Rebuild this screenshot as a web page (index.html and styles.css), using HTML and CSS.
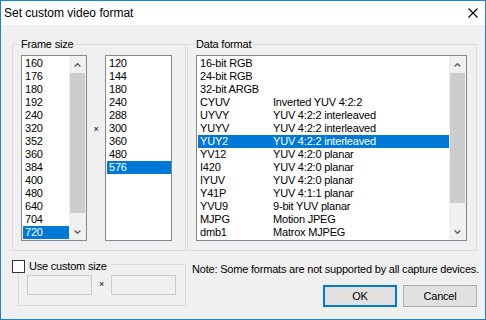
FILE: index.html
```html
<!DOCTYPE html>
<html lang="en">
<head>
    <meta charset="UTF-8">
    <title>Set custom video format</title>
    <link rel="stylesheet" href="styles.css">
</head>
<body>
    <div class="window">
        <div class="titlebar">
            <span class="title">Set custom video format</span>
            <svg class="close" width="10" height="10" viewBox="0 0 10 10">
                <path d="M0.5 0.5 L9.5 9.5 M9.5 0.5 L0.5 9.5" stroke="#000" stroke-width="1.1" fill="none"/>
            </svg>
        </div>

        <div class="dialog">
            <div class="col-left">
                <fieldset class="group">
                    <legend>Frame size</legend>
                    <div class="group-inner frame-inner">
                        <div class="listbox width-list">
                            <ul class="items">
                                <li>160</li><li>176</li><li>180</li><li>192</li><li>240</li>
                                <li>320</li><li>352</li><li>360</li><li>384</li><li>400</li>
                                <li>480</li><li>640</li><li>704</li><li class="selected">720</li>
                            </ul>
                            <div class="scrollbar">
                                <div class="arrow"><svg width="7" height="4" viewBox="0 0 7 4"><polyline points="0.6,3.5 3.5,0.7 6.4,3.5" fill="none" stroke="#606060" stroke-width="1.4"/></svg></div>
                                <div class="track"><div class="thumb thumb-frame"></div></div>
                                <div class="arrow"><svg width="7" height="4" viewBox="0 0 7 4"><polyline points="0.6,0.5 3.5,3.3 6.4,0.5" fill="none" stroke="#606060" stroke-width="1.4"/></svg></div>
                            </div>
                        </div>
                        <span class="times">×</span>
                        <div class="listbox height-list">
                            <ul class="items">
                                <li>120</li><li>144</li><li>180</li><li>240</li><li>288</li>
                                <li>300</li><li>360</li><li>480</li><li class="selected">576</li>
                            </ul>
                        </div>
                    </div>
                </fieldset>

                <fieldset class="group custom-group">
                    <legend class="check-legend"><span class="checkbox"></span><span>Use custom size</span></legend>
                    <div class="group-inner custom-inner">
                        <input class="edit" type="text" disabled>
                        <span class="times-small">×</span>
                        <input class="edit" type="text" disabled>
                    </div>
                </fieldset>
            </div>

            <div class="col-right">
                <fieldset class="group">
                    <legend>Data format</legend>
                    <div class="group-inner data-inner">
                        <div class="listbox format-list">
                            <ul class="items">
                                <li><span class="code">16-bit RGB</span></li>
                                <li><span class="code">24-bit RGB</span></li>
                                <li><span class="code">32-bit ARGB</span></li>
                                <li><span class="code">CYUV</span><span>Inverted YUV 4:2:2</span></li>
                                <li><span class="code">UYVY</span><span>YUV 4:2:2 interleaved</span></li>
                                <li><span class="code">YUYV</span><span>YUV 4:2:2 interleaved</span></li>
                                <li class="selected"><span class="code">YUY2</span><span>YUV 4:2:2 interleaved</span></li>
                                <li><span class="code">YV12</span><span>YUV 4:2:0 planar</span></li>
                                <li><span class="code">I420</span><span>YUV 4:2:0 planar</span></li>
                                <li><span class="code">IYUV</span><span>YUV 4:2:0 planar</span></li>
                                <li><span class="code">Y41P</span><span>YUV 4:1:1 planar</span></li>
                                <li><span class="code">YVU9</span><span>9-bit YUV planar</span></li>
                                <li><span class="code">MJPG</span><span>Motion JPEG</span></li>
                                <li><span class="code">dmb1</span><span>Matrox MJPEG</span></li>
                            </ul>
                            <div class="scrollbar">
                                <div class="arrow"><svg width="7" height="4" viewBox="0 0 7 4"><polyline points="0.6,3.5 3.5,0.7 6.4,3.5" fill="none" stroke="#606060" stroke-width="1.4"/></svg></div>
                                <div class="track"><div class="thumb thumb-data"></div></div>
                                <div class="arrow"><svg width="7" height="4" viewBox="0 0 7 4"><polyline points="0.6,0.5 3.5,3.3 6.4,0.5" fill="none" stroke="#606060" stroke-width="1.4"/></svg></div>
                            </div>
                        </div>
                    </div>
                </fieldset>

                <p class="note">Note: Some formats are not supported by all capture devices.</p>

                <div class="buttons">
                    <button class="btn btn-default">OK</button>
                    <button class="btn">Cancel</button>
                </div>
            </div>
        </div>
    </div>
</body>
</html>
```

FILE: styles.css
```css
* {
    margin: 0;
    padding: 0;
    box-sizing: border-box;
}

body {
    width: 486px;
    height: 320px;
    font-family: "Liberation Sans", Arial, sans-serif;
    font-size: 11px;
    letter-spacing: -0.2px;
    color: #000;
    background: #f0f0f0;
    overflow: hidden;
}

.window {
    width: 486px;
    height: 320px;
    border: 1px solid #1883d7;
    background: #f0f0f0;
    display: flex;
    flex-direction: column;
}

.titlebar {
    height: 24px;
    flex: none;
    background: #fff;
    display: flex;
    align-items: center;
    justify-content: space-between;
    padding: 0 7px 0 3px;
}

.title {
    font-size: 12px;
    letter-spacing: 0;
}

.close {
    display: block;
}

.dialog {
    display: flex;
    gap: 1px;
    padding: 12px 7px 0 11px;
}

.col-left {
    width: 174px;
    display: flex;
    flex-direction: column;
}

.col-right {
    width: 291px;
    padding-right: 1px;
}

/* group boxes */
.group {
    border: 1px solid #dcdcdc;
    min-width: 0;
}

.group legend {
    margin-left: 6px;
    padding: 0 2px;
    height: 15px;
    line-height: 15px;
}

.group-inner {
    display: flex;
}

.frame-inner {
    padding: 3px 13px 9px 8px;
}

.data-inner {
    padding: 3px 9px 9px 8px;
}

/* list boxes */
.listbox {
    height: 186px;
    border: 1px solid #828790;
    background: #fff;
    display: flex;
}

.width-list {
    width: 66px;
}

.height-list {
    width: 67px;
}

.format-list {
    width: 272px;
}

.items {
    list-style: none;
    flex: 1;
    padding: 1px 0 1px 1px;
    min-width: 0;
}

.items li {
    height: 13px;
    line-height: 13px;
    padding-left: 2px;
    white-space: nowrap;
    display: flex;
}

.items li.selected {
    background: #0078d7;
    color: #fff;
}

.code {
    width: 73px;
    flex: none;
}

.times {
    width: 18px;
    text-align: center;
    font-size: 9px;
    line-height: 9px;
    margin-top: 70px;
    align-self: flex-start;
}

/* scrollbars */
.scrollbar {
    width: 17px;
    flex: none;
    background: #f0f0f0;
    display: flex;
    flex-direction: column;
}

.arrow {
    height: 17px;
    flex: none;
    display: flex;
    align-items: center;
    justify-content: center;
}

.arrow svg {
    display: block;
}

.track {
    flex: 1;
    padding: 0 1px;
}

.thumb {
    background: #cdcdcd;
}

.thumb-frame {
    height: 140px;
}

.thumb-data {
    height: 130px;
}

/* custom size */
.custom-group {
    margin: 9px 0 0 6px;
}

.group legend.check-legend {
    margin-left: -7px;
    padding: 0 4px 0 0;
    height: 9px;
    line-height: 13px;
    display: flex;
    align-items: flex-start;
}

.checkbox {
    width: 13px;
    height: 13px;
    border: 1px solid #333;
    background: #fff;
    margin-right: 4px;
    flex: none;
}

.custom-inner {
    padding: 6px 9px 10px 8px;
    align-items: center;
}

.edit {
    width: 65px;
    height: 20px;
    border: 1px solid #cccccc;
    background: #f0f0f0;
    font: inherit;
}

.times-small {
    width: 19px;
    text-align: center;
    font-size: 9px;
    line-height: 9px;
    margin-top: -1px;
}

/* note and buttons */
.note {
    margin-top: 12px;
    padding-left: 5px;
    line-height: 13px;
    white-space: nowrap;
}

.buttons {
    margin-top: 9px;
    display: flex;
    justify-content: flex-end;
    gap: 6px;
}

.btn {
    width: 74px;
    height: 22px;
    border: 1px solid #adadad;
    background: #e1e1e1;
    font: inherit;
    letter-spacing: -0.2px;
    color: #000;
}

.btn-default {
    border: 2px solid #0078d7;
}
```
